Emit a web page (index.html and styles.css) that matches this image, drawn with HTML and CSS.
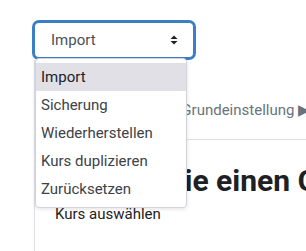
FILE: index.html
```html
<!DOCTYPE html>
<html lang="de">
<head>
    <meta charset="UTF-8">
    <title>Import</title>
    <link rel="stylesheet" href="styles.css">
</head>
<body>
    <div class="action-bar">
        <div class="select">
            <span>Import</span>
            <svg class="chevron" width="10" height="12" viewBox="0 0 10 12">
                <path d="M1.5 5 L5 1.5 L8.5 5 Z" fill="#1d2125"/>
                <path d="M1.5 7 L5 10.5 L8.5 7 Z" fill="#1d2125"/>
            </svg>
        </div>
        <ul class="menu">
            <li class="active">Import</li>
            <li>Sicherung</li>
            <li>Wiederherstellen</li>
            <li>Kurs duplizieren</li>
            <li>Zurücksetzen</li>
        </ul>
    </div>

    <div class="content">
        <div class="crumbs">1. Kurs auswählen ▶ Grundeinstellung ▶ Schema</div>
        <h2>Wählen Sie einen Grundkurs</h2>
        <div class="step">Kurs auswählen</div>
    </div>
</body>
</html>
```

FILE: styles.css
```css
body {
    font-family: Roboto, "Liberation Sans", sans-serif;
    margin: 0;
    padding: 0;
    background-color: #fff;
    color: #1d2125;
    overflow: hidden;
    height: 251px;
}

.action-bar {
    position: relative;
    padding: 20px 0 0 32px;
    height: 40px;
}

.select {
    box-sizing: border-box;
    width: 164px;
    height: 40px;
    border: 3px solid #3b7fc7;
    border-radius: 7px;
    display: flex;
    align-items: center;
    justify-content: space-between;
    padding: 0 14px 0 16px;
    font-size: 15px;
    color: #495057;
}

.chevron {
    display: block;
}

.menu {
    position: absolute;
    left: 35px;
    top: 58px;
    width: 152px;
    box-sizing: border-box;
    margin: 0;
    padding: 4px 0;
    list-style: none;
    background: #fff;
    border: 1px solid #d3d3da;
    border-radius: 4px;
    box-shadow: 0 1px 4px rgba(0,0,0,0.12);
    z-index: 2;
}

.menu li {
    height: 28px;
    line-height: 28px;
    padding-left: 5px;
    font-size: 15px;
    color: #3c4248;
}

.menu li.active {
    background-color: #e1e0e7;
    color: #1d2125;
}

.content {
    margin-left: 34px;
    border-left: 1px solid #dee2e6;
    height: 200px;
    overflow: hidden;
}

.crumbs {
    white-space: nowrap;
    font-size: 15px;
    color: #6a737b;
    padding: 41px 0 20px 5px;
    line-height: 18px;
    border-bottom: 1px solid #dee2e6;
}

h2 {
    margin: 0;
    padding: 23px 0 0 24px;
    font-size: 30px;
    font-weight: 700;
    line-height: 36px;
    white-space: nowrap;
}

.step {
    padding: 6px 0 0 20px;
    font-size: 15px;
}
```
